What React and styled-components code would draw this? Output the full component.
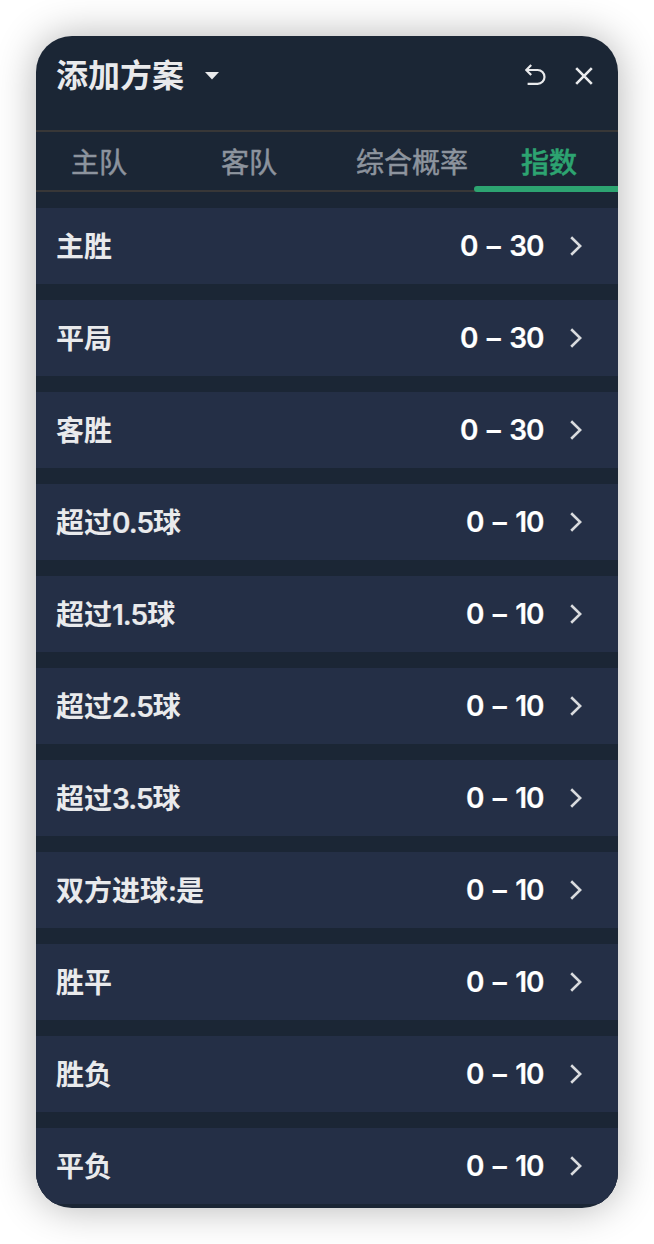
import React, { useState } from 'react';
import styled, { createGlobalStyle } from 'styled-components';

const GlobalStyle = createGlobalStyle`
    * {
        box-sizing: border-box;
    }
    body {
        margin: 0;
        background: #fff;
        font-family: Inter, "Noto Sans CJK SC", sans-serif;
    }
`;

const Page = styled.div`
    height: 1244px;
    padding: 36px;
    overflow: hidden;
`;

const Card = styled.div`
    width: 582px;
    height: 1172px;
    border-radius: 36px;
    overflow: hidden;
    background: #1b2635;
    box-shadow: 0 0 40px rgba(0, 0, 0, 0.3);
`;

const Header = styled.header`
    display: flex;
    align-items: center;
    height: 96px;
    padding: 0 20px 14px;
    border-bottom: 2px solid #383737;
    color: #e9eaec;
`;

const Title = styled.h1`
    margin: 0 21px 0 0;
    font-size: 32px;
    line-height: 40px;
    font-weight: 700;
`;

const Actions = styled.div`
    display: flex;
    align-items: center;
    gap: 28px;
    margin-left: auto;
    padding-right: 5px;
`;

const IconButton = styled.button`
    display: flex;
    padding: 0;
    border: 0;
    background: none;
    color: inherit;
`;

const Tabs = styled.nav`
    display: grid;
    grid-template-columns: 126px 174px 138px 144px;
    height: 60px;
`;

const Tab = styled.button`
    display: grid;
    grid-template-rows: 54px 6px;
    justify-items: ${props => props.$align || 'center'};
    align-items: center;
    padding: 0;
    border: 0;
    background: none;
    box-shadow: inset 0 -2px #383737;
    color: ${props => (props.$active ? '#2da471' : '#8d949e')};
    font: inherit;
    font-size: 28px;
    font-weight: ${props => (props.$active ? 500 : 400)};
    -webkit-text-stroke: 0.5px currentColor;
    line-height: 40px;
    white-space: nowrap;
`;

const TabText = styled.span`
    padding: ${props => (props.$active ? '7px 0 0 6px' : '7px 0 0')};
    margin-right: ${props => (props.$align ? 6 : 0)}px;
`;

const ActiveLine = styled.span`
    width: 100%;
    height: 6px;
    border-radius: 3px 0 0 3px;
    background: #2da471;
`;

const List = styled.div`
    display: flex;
    flex-direction: column;
    gap: 16px;
    padding-top: 16px;
    background: #1b2635;
`;

const Row = styled.div`
    display: flex;
    align-items: center;
    height: 76px;
    padding: 0 36px 0 20px;
    background: #242f46;
`;

const Label = styled.span`
    flex: 1;
    padding-top: 2px;
    color: #e9eaec;
    font-size: 28px;
    line-height: 40px;
    font-weight: 700;
`;

const Digits = styled.span`
    font-weight: 600;
    letter-spacing: -1px;
    -webkit-text-stroke: 0.2px currentColor;
`;

const Range = styled.span`
    margin-right: 26.5px;
    color: #fff;
    font-size: 28px;
    line-height: 40px;
    font-weight: 600;
    letter-spacing: -1px;
    word-spacing: 3.3px;
    -webkit-text-stroke: 0.2px #fff;
`;

const rows = [
    { label: '主胜', max: 30 },
    { label: '平局', max: 30 },
    { label: '客胜', max: 30 },
    { label: '超过0.5球', max: 10 },
    { label: '超过1.5球', max: 10 },
    { label: '超过2.5球', max: 10 },
    { label: '超过3.5球', max: 10 },
    { label: '双方进球:是', max: 10 },
    { label: '胜平', max: 10 },
    { label: '胜负', max: 10 },
    { label: '平负', max: 10 },
];

const tabs = [
    { name: '主队' },
    { name: '客队' },
    { name: '综合概率', align: 'end' },
    { name: '指数' },
];

const CaretIcon = () => (
    <svg width="14" height="8" viewBox="0 0 14 8" fill="currentColor">
        <path d="M0 0h14L7 7.5z" />
    </svg>
);

const UndoIcon = () => (
    <svg width="22" height="24" viewBox="0 0 22 24" fill="none" stroke="currentColor" strokeWidth="2.2">
        <path d="M6.2 1L1.2 6L6.2 11M1.4 6H12.6A6.9 6.9 0 0 1 12.6 19.8H2.6" />
    </svg>
);

const CloseIcon = () => (
    <svg width="18" height="18" viewBox="0 0 18 18" stroke="currentColor" strokeWidth="2.6">
        <path d="M1.2 1.2L16.8 16.8M16.8 1.2L1.2 16.8" />
    </svg>
);

const ArrowIcon = () => (
    <svg width="12" height="20" viewBox="0 0 12 20" fill="none" stroke="#d9dbde" strokeWidth="2.6">
        <path d="M1.2 1.2L10.2 10L1.2 18.8" />
    </svg>
);

const LabelText = ({ text }) => (
    <Label>
        {text.split(/([\d.:]+)/).map((part, i) => (
            i % 2 ? <Digits key={i}>{part}</Digits> : part
        ))}
    </Label>
);

function App() {
    const [active, setActive] = useState('指数');

    return (
        <Page>
            <GlobalStyle />
            <Card>
                <Header>
                    <Title>添加方案</Title>
                    <CaretIcon />
                    <Actions>
                        <IconButton><UndoIcon /></IconButton>
                        <IconButton><CloseIcon /></IconButton>
                    </Actions>
                </Header>
                <Tabs>
                    {tabs.map(tab => (
                        <Tab
                            key={tab.name}
                            $align={tab.align}
                            $active={tab.name === active}
                            onClick={() => setActive(tab.name)}
                        >
                            <TabText $align={tab.align} $active={tab.name === active}>
                                {tab.name}
                            </TabText>
                            {tab.name === active && <ActiveLine />}
                        </Tab>
                    ))}
                </Tabs>
                <List>
                    {rows.map(row => (
                        <Row key={row.label}>
                            <LabelText text={row.label} />
                            <Range>0 – {row.max}</Range>
                            <ArrowIcon />
                        </Row>
                    ))}
                </List>
            </Card>
        </Page>
    );
}

export default App;
